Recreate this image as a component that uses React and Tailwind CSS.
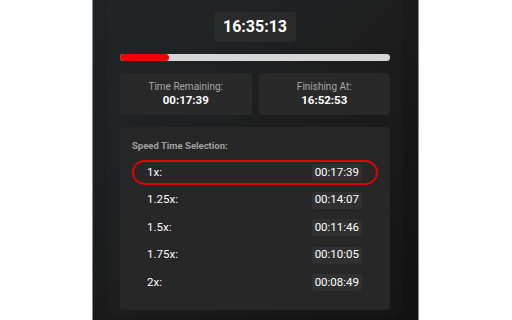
import React from 'react';

const speeds = [
  { label: '1x:', time: '00:17:39', active: true },
  { label: '1.25x:', time: '00:14:07' },
  { label: '1.5x:', time: '00:11:46' },
  { label: '1.75x:', time: '00:10:05' },
  { label: '2x:', time: '00:08:49' },
];

const InfoCard = ({ label, value }) => (
  <div className="flex flex-col items-center justify-center rounded bg-[#292929] h-[42px]">
    <div className="text-[10px] leading-[13px] text-[#a8a8a8]">{label}</div>
    <div className="text-[11.5px] leading-[15px] font-bold text-white">{value}</div>
  </div>
);

export default function App() {
  return (
    <div className="w-[512px] h-[320px] bg-white overflow-hidden font-['Roboto',sans-serif]">
      <div className="ml-[92px] w-[327px] h-full border-x border-[#8a8a8a] bg-gradient-to-br from-[#1f2326] via-[#1a1a1a] to-[#111111]">
        <div className="ml-[14px] mr-[15px] h-[316px] rounded-b-xl bg-white/[0.015] px-[13px] pt-[12px] flex flex-col">
          <div className="mx-auto w-[82px] h-[30px] rounded bg-[#2a2a2a] flex items-center justify-center text-white text-[16px] font-bold">
            16:35:13
          </div>

          <div className="mt-[12px] h-[7px] rounded-full bg-[#d6d6d6] overflow-hidden">
            <div className="h-full w-[49px] rounded-full bg-[#f00000]" />
          </div>

          <div className="mt-[12px] grid grid-cols-2 gap-[7px]">
            <InfoCard label="Time Remaining:" value="00:17:39" />
            <InfoCard label="Finishing At:" value="16:52:53" />
          </div>

          <div className="mt-[12px] h-[183px] rounded bg-[#272727] px-[12px] pt-[13px]">
            <div className="text-[9.5px] leading-[12px] font-bold text-[#a0a0a0]">Speed Time Selection:</div>
            <div className="mt-[8px] flex flex-col gap-[2.5px]">
              {speeds.map(s => (
                <div
                  key={s.label}
                  className={`h-[25px] flex items-center justify-between pl-[13px] pr-[14px] rounded-full border-2 ${
                    s.active ? 'border-[#e00000]' : 'border-transparent'
                  }`}
                >
                  <span className="text-[11.5px] text-white">{s.label}</span>
                  <span className="px-[3px] h-[17px] flex items-center rounded-[3px] bg-[#303030] text-[11.5px] text-white">
                    {s.time}
                  </span>
                </div>
              ))}
            </div>
          </div>
        </div>
      </div>
    </div>
  );
}
